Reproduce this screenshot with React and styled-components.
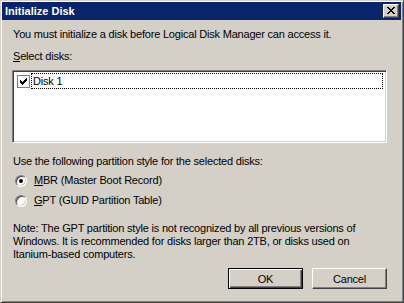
import React from 'react';
import styled, { createGlobalStyle } from 'styled-components';

const GlobalStyle = createGlobalStyle`
  html, body {
    margin: 0;
    padding: 0;
    background: #d4d0c8;
  }
  body {
    font-family: "Liberation Sans", Arial, sans-serif;
    font-size: 11px;
    color: #000;
  }
`;

const Window = styled.div`
  width: 404px;
  height: 303px;
  box-sizing: border-box;
  background: #d4d0c8;
  border: 1px solid;
  border-color: #d4d0c8 #404040 #404040 #d4d0c8;
  box-shadow: inset 1px 1px #fff, inset -1px -1px #808080;
  padding: 1px 2px 2px 1px;
  display: flex;
  flex-direction: column;
`;

const TitleBar = styled.div`
  height: 18px;
  background: #0a246a;
  display: flex;
  align-items: center;
  justify-content: space-between;
  padding: 0 2px 0 3px;
  flex-shrink: 0;
`;

const Title = styled.span`
  color: #fff;
  font-weight: bold;
  font-size: 11px;
  line-height: 13px;
`;

const CloseButton = styled.div`
  width: 16px;
  height: 14px;
  box-sizing: border-box;
  background: #d4d0c8;
  border: 1px solid;
  border-color: #fff #404040 #404040 #fff;
  box-shadow: inset -1px -1px #808080;
  display: flex;
  align-items: center;
  justify-content: center;
  padding: 0 1px 1px 0;
`;

const Body = styled.div`
  flex: 1;
  display: flex;
  flex-direction: column;
  padding: 8px 14px 0 10px;
  letter-spacing: -0.2px;
`;

const Text = styled.div`
  line-height: 13px;
  margin-top: ${(p) => p.$mt || 0}px;
  padding-left: 1px;
`;

const ListBox = styled.div`
  margin-top: 7px;
  height: 73px;
  box-sizing: border-box;
  background: #fff;
  border: 1px solid;
  border-color: #808080 #fff #fff #808080;
  box-shadow: inset 1px 1px #404040, inset -1px -1px #d4d0c8;
  padding: 2px 3px 2px 2px;
`;

const ListRow = styled.div`
  display: flex;
  align-items: center;
  height: 16px;
`;

const ListCheck = styled.div`
  width: 13px;
  height: 13px;
  box-sizing: border-box;
  border: 1px solid #808080;
  background: #fff;
  display: flex;
  align-items: center;
  justify-content: center;
  margin: 0 1px 0 2px;
  flex-shrink: 0;
`;

const ListLabel = styled.div`
  flex: 1;
  height: 16px;
  box-sizing: border-box;
  border: 1px dotted #000;
  line-height: 14px;
  padding-left: 1px;
`;

const RadioGroup = styled.div`
  display: flex;
  flex-direction: column;
  gap: 7px;
  margin-top: 6px;
  padding-left: 3px;
`;

const RadioRow = styled.label`
  display: flex;
  align-items: center;
  gap: 7px;
  height: 13px;
  line-height: 13px;
`;

const Radio = styled.span`
  width: 12px;
  height: 12px;
  box-sizing: border-box;
  border-radius: 50%;
  border: 1px solid;
  border-color: #808080 #fff #fff #808080;
  box-shadow: inset 1px 1px #404040, inset -1px -1px #d4d0c8;
  background: #fff;
  display: flex;
  align-items: center;
  justify-content: center;
  flex-shrink: 0;

  &::after {
    content: '';
    width: 4px;
    height: 4px;
    border-radius: 50%;
    background: ${(p) => (p.$checked ? '#000' : 'transparent')};
  }
`;

const Note = styled.div`
  margin-top: 15px;
  line-height: 13px;
  padding-left: 1px;
  padding-right: 6px;
`;

const ButtonRow = styled.div`
  display: flex;
  justify-content: flex-end;
  gap: 9px;
  margin-top: 7px;
`;

const Button = styled.div`
  width: 75px;
  height: 21px;
  box-sizing: border-box;
  background: #d4d0c8;
  display: flex;
  align-items: center;
  justify-content: center;
  border: 1px solid;
  border-color: ${(p) => (p.$default ? '#000' : '#fff #404040 #404040 #fff')};
  box-shadow: ${(p) =>
    p.$default
      ? 'inset 1px 1px #fff, inset -1px -1px #404040, inset -2px -2px #808080'
      : 'inset -1px -1px #808080'};
`;

const CloseIcon = () => (
  <svg width="8" height="7" viewBox="0 0 8 7" shapeRendering="crispEdges">
    <path
      fill="#000"
      d="M0 0h2v1H0zM6 0h2v1H6zM1 1h2v1H1zM5 1h2v1H5zM2 2h4v1H2zM3 3h2v1H3zM2 4h4v1H2zM1 5h2v1H1zM5 5h2v1H5zM0 6h2v1H0zM6 6h2v1H6z"
    />
  </svg>
);

const CheckIcon = () => (
  <svg width="7" height="7" viewBox="0 0 7 7" shapeRendering="crispEdges">
    <path
      fill="#000"
      d="M6 0h1v1H6zM5 1h2v1H5zM0 2h1v1H0zM4 2h3v1H4zM0 3h2v1H0zM3 3h3v1H3zM0 4h5v1H0zM1 5h3v1H1zM2 6h1v1H2z"
    />
  </svg>
);

export default function App() {
  return (
    <>
      <GlobalStyle />
      <Window>
        <TitleBar>
          <Title>Initialize Disk</Title>
          <CloseButton>
            <CloseIcon />
          </CloseButton>
        </TitleBar>
        <Body>
          <Text>You must initialize a disk before Logical Disk Manager can access it.</Text>
          <Text $mt={9}>
            <u>S</u>elect disks:
          </Text>
          <ListBox>
            <ListRow>
              <ListCheck>
                <CheckIcon />
              </ListCheck>
              <ListLabel>Disk 1</ListLabel>
            </ListRow>
          </ListBox>
          <Text $mt={12}>Use the following partition style for the selected disks:</Text>
          <RadioGroup>
            <RadioRow>
              <Radio $checked />
              <span>
                <u>M</u>BR (Master Boot Record)
              </span>
            </RadioRow>
            <RadioRow>
              <Radio />
              <span>
                <u>G</u>PT (GUID Partition Table)
              </span>
            </RadioRow>
          </RadioGroup>
          <Note>
            Note: The GPT partition style is not recognized by all previous versions of Windows. It is
            recommended for disks larger than 2TB, or disks used on Itanium-based computers.
          </Note>
          <ButtonRow>
            <Button $default>OK</Button>
            <Button>Cancel</Button>
          </ButtonRow>
        </Body>
      </Window>
    </>
  );
}
